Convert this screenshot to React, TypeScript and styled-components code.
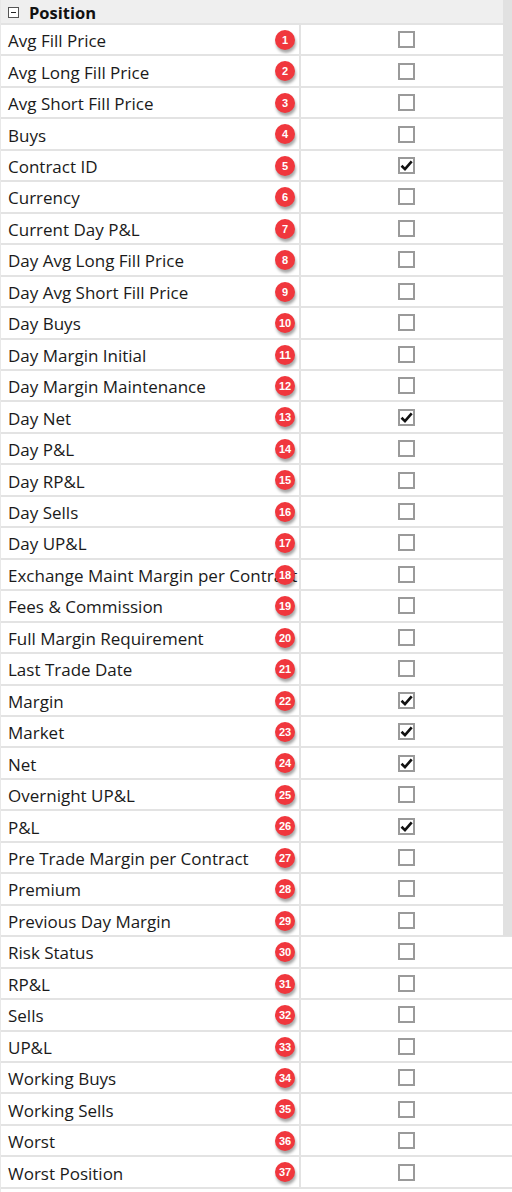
import styled, { createGlobalStyle } from 'styled-components'

const fields: [string, boolean][] = [
  ['Avg Fill Price', false],
  ['Avg Long Fill Price', false],
  ['Avg Short Fill Price', false],
  ['Buys', false],
  ['Contract ID', true],
  ['Currency', false],
  ['Current Day P&L', false],
  ['Day Avg Long Fill Price', false],
  ['Day Avg Short Fill Price', false],
  ['Day Buys', false],
  ['Day Margin Initial', false],
  ['Day Margin Maintenance', false],
  ['Day Net', true],
  ['Day P&L', false],
  ['Day RP&L', false],
  ['Day Sells', false],
  ['Day UP&L', false],
  ['Exchange Maint Margin per Contract', false],
  ['Fees & Commission', false],
  ['Full Margin Requirement', false],
  ['Last Trade Date', false],
  ['Margin', true],
  ['Market', true],
  ['Net', true],
  ['Overnight UP&L', false],
  ['P&L', true],
  ['Pre Trade Margin per Contract', false],
  ['Premium', false],
  ['Previous Day Margin', false],
  ['Risk Status', false],
  ['RP&L', false],
  ['Sells', false],
  ['UP&L', false],
  ['Working Buys', false],
  ['Working Sells', false],
  ['Worst', false],
  ['Worst Position', false],
]

const App = () => {
  return (
    <>
      <GlobalStyle />
      <Panel>
        <Header>
          <Toggle />
          <span>Position</span>
        </Header>
        {fields.map(([name, checked], i) => (
          <Row key={name}>
            <NameCell>
              <Label>{name}</Label>
              <Badge>{i + 1}</Badge>
            </NameCell>
            <ValueCell>
              <Check>
                {checked && (
                  <svg width="13" height="13" viewBox="0 0 12 12">
                    <path d="M1.4 6.2 L4.6 9.4 L10.8 2.2" fill="none" stroke="#111" strokeWidth="2.4" />
                  </svg>
                )}
              </Check>
            </ValueCell>
          </Row>
        ))}
        <Scrollbar />
      </Panel>
    </>
  )
}

export default App

const GlobalStyle = createGlobalStyle`
  body {
    margin: 0;
    background: #fff;
    font-family: "Open Sans", "Noto Sans", sans-serif;
  }
`

const Panel = styled.div`
  position: relative;
  width: 512px;
  height: 1192px;
  overflow: hidden;
  background: #fff;
  border-left: 1px solid #e8e8e8;
  box-sizing: border-box;
`

const Header = styled.div`
  height: 25px;
  box-sizing: border-box;
  background: #efefef;
  border-bottom: 2px solid #e3e3e3;
  display: flex;
  align-items: center;
  gap: 10px;
  padding-left: 7px;
  padding-top: 2px;
  font-size: 16.5px;
  font-weight: 700;
  color: #111;
`

const Toggle = styled.div`
  width: 9px;
  height: 9px;
  border: 1px solid #555;
  position: relative;
  background: #fff;
  &::after {
    content: '';
    position: absolute;
    left: 2px;
    right: 2px;
    top: 4px;
    height: 1px;
    background: #222;
  }
`

const Row = styled.div`
  display: grid;
  grid-template-columns: 300px 1fr;
  height: 31.46px;
  box-sizing: border-box;
  border-bottom: 2px solid #e3e3e3;
`

const NameCell = styled.div`
  position: relative;
  display: flex;
  align-items: center;
  padding-left: 7px;
  padding-top: 2px;
  border-right: 2px solid #e3e3e3;
  white-space: nowrap;
  overflow: hidden;
`

const Label = styled.span`
  font-size: 17px;
  color: #1a1a1a;
`

const Badge = styled.div`
  position: absolute;
  left: 274px;
  top: 5px;
  width: 20px;
  height: 20px;
  border-radius: 50%;
  background: #f0373d;
  box-shadow: 1px 3px 3px rgba(0, 0, 0, 0.35);
  color: #fff;
  font-family: "Liberation Sans", Arial, sans-serif;
  font-size: 11px;
  font-weight: 700;
  display: flex;
  align-items: center;
  justify-content: center;
`

const ValueCell = styled.div`
  display: flex;
  align-items: center;
  justify-content: center;
`

const Check = styled.div`
  width: 17px;
  height: 17px;
  box-sizing: border-box;
  border: 2px solid #9a9a9a;
  background: #fff;
  display: flex;
  align-items: center;
  justify-content: center;
`

const Scrollbar = styled.div`
  position: absolute;
  top: 0;
  right: 0;
  width: 9px;
  height: 936px;
  background: #e1e1e1;
`
